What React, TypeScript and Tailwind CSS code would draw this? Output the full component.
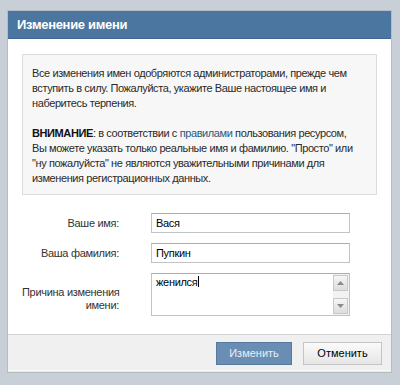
import React from 'react';

const font = { fontFamily: '"Liberation Sans", Arial, sans-serif' };

function Field({ label, value }: { label: string; value: string }) {
  return (
    <div className="flex items-center">
      <div className="w-[97px] whitespace-nowrap text-right text-[11px] tracking-[-0.3px] text-[#333]">{label}</div>
      <div className="ml-[32px] h-[20px] w-[199px] border border-[#bfc4c9] border-t-[#a9aeb3] bg-white px-[4px] text-[11px] leading-[18px] tracking-[-0.3px] text-black">
        {value}
      </div>
    </div>
  );
}

function ScrollArrow({ up }: { up?: boolean }) {
  return (
    <div className="flex h-[16px] w-[15px] items-center justify-center border border-[#c9c9c9] bg-gradient-to-b from-[#f6f6f6] to-[#dcdcdc]">
      <svg width="7" height="4" viewBox="0 0 7 4">
        {up ? <path d="M0 4 L3.5 0 L7 4 Z" fill="#8a8a8a" /> : <path d="M0 0 L3.5 4 L7 0 Z" fill="#8a8a8a" />}
      </svg>
    </div>
  );
}

export default function App() {
  return (
    <div className="h-[385px] w-[400px] overflow-hidden bg-[#c8cfd6] pb-[12px] pl-[7px] pr-[8px] pt-[10px]" style={font}>
      <div className="flex h-full flex-col border border-[#b4bcc5] bg-white">
        {/* Header */}
        <div className="flex h-[28px] shrink-0 items-center border-b border-[#3f6994] bg-[#4a76a0] px-[9px] text-[13px] font-bold tracking-[-0.3px] text-white">
          Изменение имени
        </div>

        {/* Body */}
        <div className="flex-1 px-[14px] pt-[15px]">
          <div className="whitespace-nowrap border border-[#dcdcdc] bg-[#f7f7f7] pb-[8px] pl-[9px] pr-[8px] pt-[11px] text-[11px] leading-[15px] tracking-[-0.4px] text-[#2a2a2a]">
            <p>
              Все изменения имен одобряются администраторами, прежде чем
              <br />
              вступить в силу. Пожалуйста, укажите Ваше настоящее имя и
              <br />
              наберитесь терпения.
            </p>
            <p className="mt-[15px]">
              <b className="text-[#111]">ВНИМАНИЕ</b>: в соответствии с{' '}
              <span className="text-[#2b587a]">правилами</span> пользования ресурсом,
              <br />
              Вы можете указать только реальные имя и фамилию. "Просто" или
              <br />
              "ну пожалуйста" не являются уважительными причинами для
              <br />
              изменения регистрационных данных.
            </p>
          </div>

          <div className="mt-[18px] flex flex-col gap-[10px]">
            <Field label="Ваше имя:" value="Вася" />
            <Field label="Ваша фамилия:" value="Пупкин" />
            <div className="flex items-center">
              <div className="w-[97px] whitespace-nowrap pt-[9px] text-right text-[11px] leading-[13px] tracking-[-0.3px] text-[#333]">
                Причина изменения
                <br />
                имени:
              </div>
              <div className="ml-[32px] flex h-[43px] w-[199px] border border-[#bfc4c9] border-t-[#a9aeb3] bg-white">
                <div className="flex-1 px-[4px] text-[11px] leading-[16px] tracking-[-0.3px] text-black">
                  женился<span className="ml-[1px] inline-block h-[11px] w-[1px] translate-y-[1px] bg-black" />
                </div>
                <div className="flex w-[16px] flex-col justify-between bg-[#f2f2f2] py-[1px]">
                  <ScrollArrow up />
                  <ScrollArrow />
                </div>
              </div>
            </div>
          </div>
        </div>

        {/* Footer */}
        <div className="flex h-[36px] shrink-0 items-start justify-end gap-[11px] border-t border-[#d2d2d2] bg-[#f0f0f0] pr-[9px] pt-[7px]">
          <button className="h-[23px] w-[76px] border border-[#55799f] bg-[#6a8db3] text-[11px] text-[#e9eff6]">
            Изменить
          </button>
          <button className="h-[23px] w-[79px] border border-[#c4c4c4] bg-gradient-to-b from-[#fafafa] to-[#e6e6e6] text-[11px] text-black">
            Отменить
          </button>
        </div>
        <div className="h-[2px] shrink-0 border-t border-[#fafafa] bg-[#e4e8ec]" />
      </div>
    </div>
  );
}
